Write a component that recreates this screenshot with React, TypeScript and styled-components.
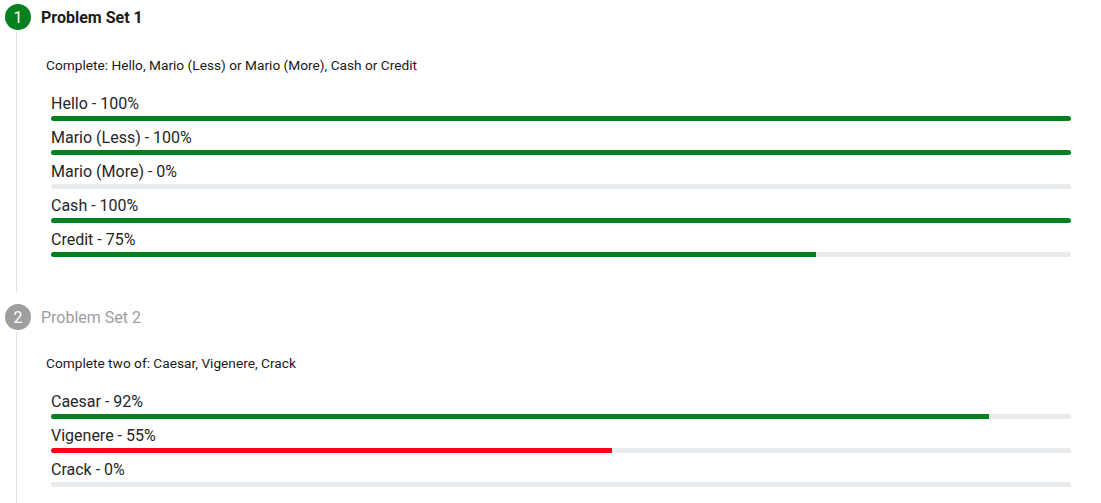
import React from "react";
import styled, { createGlobalStyle } from "styled-components";

const Global = createGlobalStyle`
  html, body { margin: 0; padding: 0; background: #fff; }
  body { font-family: Roboto, "Liberation Sans", Arial, sans-serif; color: #222; }
`;

const Page = styled.div`
  padding: 4px 30px 0 5px;
`;

const Step = styled.section`
  display: flex;
  flex-direction: column;
  & + & { margin-top: 12px; }
`;

const StepHeader = styled.div`
  display: flex;
  align-items: center;
  gap: 10px;
  height: 26px;
`;

const Circle = styled.div<{ $active: boolean }>`
  width: 26px;
  height: 26px;
  border-radius: 50%;
  background: ${(p) => (p.$active ? "#03801f" : "#9e9e9e")};
  color: #fff;
  font-size: 16px;
  display: flex;
  align-items: center;
  justify-content: center;
  flex-shrink: 0;
`;

const Title = styled.div<{ $active: boolean }>`
  font-size: 16px;
  font-weight: ${(p) => (p.$active ? 700 : 400)};
  color: ${(p) => (p.$active ? "#1a1a1a" : "#9e9e9e")};
`;

const StepBody = styled.div<{ $top: number }>`
  margin-left: 11px;
  margin-top: 2px;
  border-left: 1px solid #e2e2e2;
  padding: ${(p) => p.$top}px 0 35px 29px;
`;

const Description = styled.div`
  font-size: 13.7px;
  line-height: 16px;
  color: #1a1a1a;
`;

const List = styled.div`
  margin-top: 21px;
  padding-left: 5px;
  display: flex;
  flex-direction: column;
  gap: 7px;
`;

const Row = styled.div`
  display: flex;
  flex-direction: column;
`;

const Label = styled.div`
  font-size: 16px;
  line-height: 20px;
  color: #262626;
`;

const Track = styled.div`
  margin-top: 2px;
  height: 5px;
  border-radius: 3px;
  background: #e8ebee;
  overflow: hidden;
`;

const Fill = styled.div<{ $color: string }>`
  height: 100%;
  background: ${(p) => p.$color};
`;

type Item = { name: string; pct: number; color?: string };

const sets: { n: number; title: string; active: boolean; desc: string; top: number; items: Item[] }[] = [
  {
    n: 1,
    title: "Problem Set 1",
    active: true,
    desc: "Complete: Hello, Mario (Less) or Mario (More), Cash or Credit",
    top: 25,
    items: [
      { name: "Hello", pct: 100 },
      { name: "Mario (Less)", pct: 100 },
      { name: "Mario (More)", pct: 0 },
      { name: "Cash", pct: 100 },
      { name: "Credit", pct: 75 },
    ],
  },
  {
    n: 2,
    title: "Problem Set 2",
    active: false,
    desc: "Complete two of: Caesar, Vigenere, Crack",
    top: 23,
    items: [
      { name: "Caesar", pct: 92 },
      { name: "Vigenere", pct: 55, color: "#ff0019" },
      { name: "Crack", pct: 0 },
    ],
  },
];

export default function App() {
  return (
    <Page>
      <Global />
      {sets.map((s) => (
        <Step key={s.n}>
          <StepHeader>
            <Circle $active={s.active}>{s.n}</Circle>
            <Title $active={s.active}>{s.title}</Title>
          </StepHeader>
          <StepBody $top={s.top}>
            <Description>{s.desc}</Description>
            <List>
              {s.items.map((it) => (
                <Row key={it.name}>
                  <Label>
                    {it.name} - {it.pct}%
                  </Label>
                  <Track>
                    <Fill $color={it.color ?? "#03801f"} style={{ width: `${it.pct}%` }} />
                  </Track>
                </Row>
              ))}
            </List>
          </StepBody>
        </Step>
      ))}
    </Page>
  );
}
